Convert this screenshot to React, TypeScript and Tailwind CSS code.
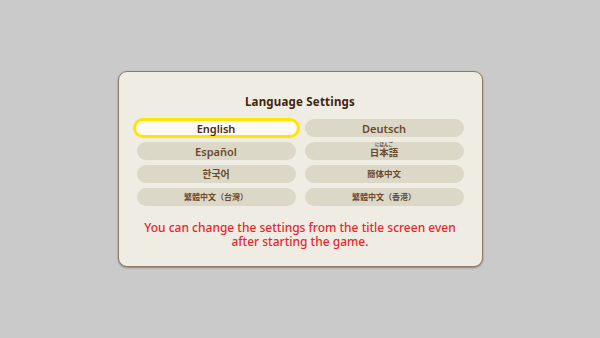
import * as React from "react";

const languages = [
  { id: "en", label: "English" },
  { id: "de", label: "Deutsch" },
  { id: "es", label: "Español" },
  { id: "ja", label: "日本語", ruby: "にほんご" },
  { id: "ko", label: "한국어", size: "text-[10px]" },
  { id: "zh-hans", label: "簡体中文", size: "text-[8.5px]" },
  { id: "zh-tw", label: "繁體中文（台灣）", size: "text-[8px]" },
  { id: "zh-hk", label: "繁體中文（香港）", size: "text-[8px]" },
];

export default function App() {
  const [selected, setSelected] = React.useState("en");

  return (
    <div
      className="w-[600px] h-[338px] bg-[#cacaca] flex items-center justify-center"
      style={{ fontFamily: '"Noto Sans", "Noto Sans CJK JP", sans-serif' }}
    >
      <div className="w-[365px] h-[196px] rounded-[9px] bg-[#efece3] border border-[#8d7a66] shadow-[0_1px_2px_rgba(80,60,40,0.5)] px-[18px] pt-[22px] pb-[20px] flex flex-col">
        <h1 className="text-center text-[11.5px] leading-[16px] font-bold tracking-[0.2px] text-[#3f2412]">
          Language Settings
        </h1>

        <div className="mt-[9px] grid grid-cols-2 gap-x-[9px] gap-y-[5px]">
          {languages.map((lang) => {
            const active = lang.id === selected;
            return (
              <button
                key={lang.id}
                onClick={() => setSelected(lang.id)}
                className={
                  active
                    ? "-mx-1 -my-px h-[20px] rounded-full border-[3px] border-[#ffe600] bg-[#fffaf3] flex items-center justify-center font-semibold text-[#4a2a14]"
                    : "h-[18px] rounded-full bg-[#dcd8c8] flex items-center justify-center font-semibold text-[#6b4a2e]"
                }
              >
                {lang.ruby ? (
                  <span className="relative text-[9.5px] leading-none mt-[4px]">
                    {lang.label}
                    <span className="absolute left-0 right-0 -top-[6px] text-center text-[4.5px] leading-none">
                      {lang.ruby}
                    </span>
                  </span>
                ) : lang.size ? (
                  <span className={`${lang.size} leading-none`}>{lang.label}</span>
                ) : (
                  <span className="text-[11px] leading-none">{lang.label}</span>
                )}
              </button>
            );
          })}
        </div>

        <p className="mt-[15px] text-center text-[12px] leading-[14px] font-medium whitespace-nowrap text-[#e8262e]">
          You can change the settings from the title screen even
          <br />
          after starting the game.
        </p>
      </div>
    </div>
  );
}
